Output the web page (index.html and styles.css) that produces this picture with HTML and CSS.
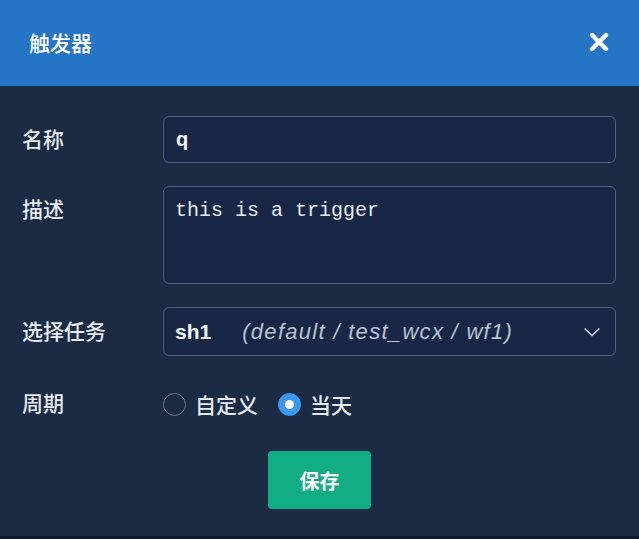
FILE: index.html
```html
<!DOCTYPE html>
<html lang="zh-CN">
<head>
    <meta charset="UTF-8">
    <meta name="viewport" content="width=device-width, initial-scale=1.0">
    <title>触发器</title>
    <link rel="stylesheet" href="styles.css">
</head>
<body>
    <div class="dialog">
        <div class="dialog-header">
            <div class="dialog-title">触发器</div>
            <button class="close-btn" type="button" aria-label="关闭">
                <svg width="22" height="22" viewBox="0 0 22 22">
                    <path d="M4 4 L18 18 M18 4 L4 18" stroke="#ffffff" stroke-width="4.4" stroke-linecap="round"/>
                </svg>
            </button>
        </div>

        <div class="dialog-body">
            <div class="form-row">
                <label class="form-label" for="name">名称</label>
                <input class="form-input" id="name" type="text" value="q">
            </div>

            <div class="form-row top">
                <label class="form-label" for="desc">描述</label>
                <textarea class="form-textarea" id="desc">this is a trigger</textarea>
            </div>

            <div class="form-row">
                <label class="form-label">选择任务</label>
                <div class="form-select">
                    <span class="task-name">sh1</span>
                    <span class="task-path">(default / test_wcx / wf1)</span>
                    <svg class="chevron" width="18" height="10" viewBox="0 0 18 10">
                        <path d="M1.5 1.5 L9 8.5 L16.5 1.5" fill="none" stroke="#c5cfdc" stroke-width="1.6"/>
                    </svg>
                </div>
            </div>

            <div class="form-row radio-row">
                <label class="form-label">周期</label>
                <div class="radio-group">
                    <label class="radio">
                        <span class="radio-dot"></span>
                        <span>自定义</span>
                    </label>
                    <label class="radio checked">
                        <span class="radio-dot"></span>
                        <span>当天</span>
                    </label>
                </div>
            </div>

            <div class="actions">
                <button class="save-btn" type="button">保存</button>
            </div>
        </div>
    </div>
</body>
</html>
```

FILE: styles.css
```css
* {
    margin: 0;
    padding: 0;
    box-sizing: border-box;
}

html, body {
    width: 639px;
    height: 539px;
    overflow: hidden;
}

body {
    font-family: "Liberation Sans", "Noto Sans CJK SC", sans-serif;
    background: #0f1a2b;
    color: #e9eef5;
}

.dialog {
    height: 536px;
    display: flex;
    flex-direction: column;
    background: #1b2b44;
}

.dialog-header {
    height: 86px;
    background: #2475c5;
    display: flex;
    align-items: center;
    justify-content: space-between;
    padding: 0 29px 0 29px;
    flex-shrink: 0;
}

.dialog-title {
    font-size: 21px;
    font-weight: 500;
    color: #ffffff;
    padding-bottom: 2px;
}

.close-btn {
    background: none;
    border: none;
    width: 22px;
    height: 22px;
    display: flex;
    margin-bottom: 2px;
}

.dialog-body {
    padding: 30px 23px 0 22px;
    display: flex;
    flex-direction: column;
    gap: 23px;
}

.form-row {
    display: flex;
    align-items: center;
}

.form-row.top {
    align-items: flex-start;
}

.form-row.top .form-label {
    padding-top: 11px;
}

.form-label {
    width: 141px;
    flex-shrink: 0;
    font-size: 21px;
    font-weight: 500;
    color: #e6ebf2;
    line-height: 26px;
}

.form-input,
.form-textarea,
.form-select {
    width: 453px;
    background: #182746;
    border: 1.5px solid #4d6283;
    border-radius: 6px;
    color: #f1f4f8;
    outline: none;
}

.form-input {
    height: 47px;
    padding: 0 12px;
    font-family: "Liberation Sans", sans-serif;
    font-size: 20px;
    font-weight: 700;
}

.form-textarea {
    height: 98px;
    padding: 12px 11px;
    font-family: "Liberation Mono", monospace;
    font-size: 20px;
    line-height: 24px;
    resize: none;
    color: #e6ebf2;
}

.form-select {
    height: 49px;
    display: flex;
    align-items: center;
    padding: 0 12px 0 11px;
}

.task-name {
    font-size: 21px;
    font-weight: 700;
    color: #f1f4f8;
    margin-right: 31px;
}

.task-path {
    font-size: 22px;
    font-style: italic;
    color: #b9c3d1;
    letter-spacing: 1.3px;
    flex: 1;
}

.chevron {
    margin-right: 2px;
}

.radio-row {
    margin-top: 10px;
}

.radio-group {
    display: flex;
    gap: 20px;
}

.radio {
    display: flex;
    align-items: center;
    gap: 9px;
    font-size: 21px;
    font-weight: 500;
    color: #e6ebf2;
}

.radio-dot {
    width: 23px;
    height: 23px;
    border-radius: 50%;
    border: 1.5px solid #66778f;
    display: flex;
    align-items: center;
    justify-content: center;
}

.radio.checked .radio-dot {
    background: #3a98ef;
    border-color: #3a98ef;
}

.radio.checked .radio-dot::after {
    content: '';
    width: 9px;
    height: 9px;
    border-radius: 50%;
    background: #ffffff;
}

.actions {
    display: flex;
    justify-content: center;
    margin-top: 9px;
}

.save-btn {
    width: 103px;
    height: 58px;
    margin-left: 1px;
    background: #13ad84;
    border: none;
    border-radius: 4px;
    color: #ffffff;
    font-family: "Noto Sans CJK SC", sans-serif;
    font-size: 20px;
    font-weight: 700;
}
```
